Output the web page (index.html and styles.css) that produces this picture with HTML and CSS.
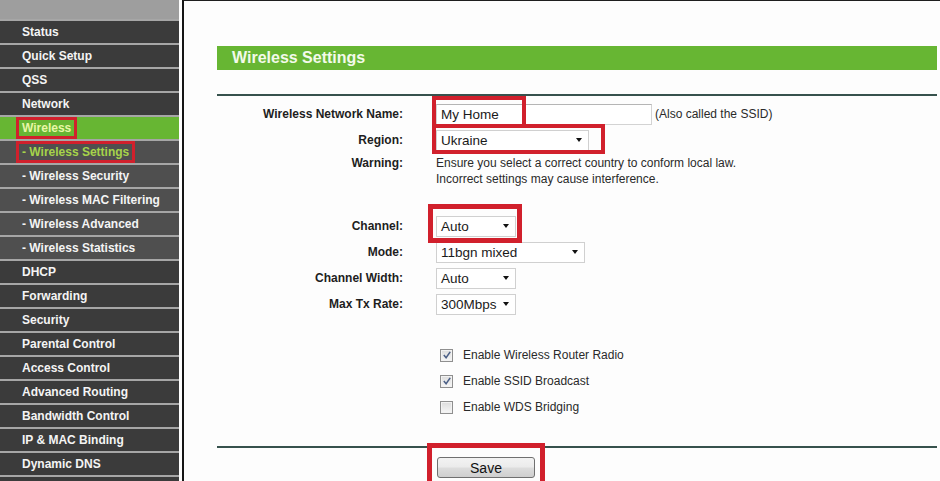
FILE: index.html
```html
<!DOCTYPE html>
<html lang="en">
<head>
<meta charset="UTF-8" />
<title>Wireless Settings</title>
<link rel="stylesheet" href="styles.css">
</head>
<body>
  <div class="page">
    <nav class="menu">
      <div class="menu-top"></div>
      <a class="item">Status</a>
      <a class="item">Quick Setup</a>
      <a class="item">QSS</a>
      <a class="item">Network</a>
      <a class="item active"><span class="flag">Wireless</span></a>
      <a class="item sub current"><span class="flag">- Wireless Settings</span></a>
      <a class="item sub">- Wireless Security</a>
      <a class="item sub">- Wireless MAC Filtering</a>
      <a class="item sub">- Wireless Advanced</a>
      <a class="item sub">- Wireless Statistics</a>
      <a class="item">DHCP</a>
      <a class="item">Forwarding</a>
      <a class="item">Security</a>
      <a class="item">Parental Control</a>
      <a class="item">Access Control</a>
      <a class="item">Advanced Routing</a>
      <a class="item">Bandwidth Control</a>
      <a class="item">IP &amp; MAC Binding</a>
      <a class="item">Dynamic DNS</a>
      <a class="item"></a>
    </nav>

    <main class="content">
      <h2 class="title-bar">Wireless Settings</h2>
      <div class="rule"></div>

      <form class="settings">
        <div class="row row-name">
          <span class="lbl">Wireless Network Name:</span>
          <div class="field">
            <span class="wrap">
              <input class="text" type="text" value="My Home" />
              <span class="mark mark-name"></span>
            </span>
            <span class="hint">(Also called the SSID)</span>
          </div>
        </div>

        <div class="row">
          <span class="lbl">Region:</span>
          <div class="field">
            <span class="wrap">
              <span class="select w-region">Ukraine <i class="arrow"></i></span>
              <span class="mark mark-region"></span>
            </span>
          </div>
        </div>

        <div class="row row-warning">
          <span class="lbl">Warning:</span>
          <div class="field note">
            Ensure you select a correct country to conform local law.<br />
            Incorrect settings may cause interference.
          </div>
        </div>

        <div class="row row-channel">
          <span class="lbl">Channel:</span>
          <div class="field">
            <span class="wrap">
              <span class="select w-short">Auto <i class="arrow"></i></span>
              <span class="mark mark-channel"></span>
            </span>
          </div>
        </div>

        <div class="row">
          <span class="lbl">Mode:</span>
          <div class="field">
            <span class="select w-mode">11bgn mixed <i class="arrow"></i></span>
          </div>
        </div>

        <div class="row">
          <span class="lbl">Channel Width:</span>
          <div class="field">
            <span class="select w-short">Auto <i class="arrow"></i></span>
          </div>
        </div>

        <div class="row">
          <span class="lbl">Max Tx Rate:</span>
          <div class="field">
            <span class="select w-short">300Mbps <i class="arrow"></i></span>
          </div>
        </div>

        <div class="row row-first-check">
          <span class="lbl"></span>
          <div class="field">
            <span class="check on"><svg viewBox="0 0 11 11"><path d="M2 5.5 L4.5 8.5 L9 2" /></svg></span>
            <span class="check-label">Enable Wireless Router Radio</span>
          </div>
        </div>

        <div class="row">
          <span class="lbl"></span>
          <div class="field">
            <span class="check on"><svg viewBox="0 0 11 11"><path d="M2 5.5 L4.5 8.5 L9 2" /></svg></span>
            <span class="check-label">Enable SSID Broadcast</span>
          </div>
        </div>

        <div class="row">
          <span class="lbl"></span>
          <div class="field">
            <span class="check"></span>
            <span class="check-label">Enable WDS Bridging</span>
          </div>
        </div>

        <div class="rule rule-bottom"></div>

        <div class="row row-save">
          <span class="lbl"></span>
          <div class="field">
            <span class="wrap">
              <button type="button" class="btn">Save</button>
              <span class="mark mark-save"></span>
            </span>
          </div>
        </div>
      </form>
    </main>
  </div>
</body>
</html>
```

FILE: styles.css
```css
:root {
  --menu-dark: #3b3b3b;
  --menu-sub: #4f4f4f;
  --menu-line: #a6a6a6;
  --green: #67b633;
  --red: #d1202c;
  --text: #222;
  --font: "Liberation Sans", Arial, sans-serif;
}
* {
  box-sizing: border-box;
}
html, body {
  margin: 0;
  padding: 0;
}
body {
  font-family: var(--font);
  font-size: 12px;
  color: var(--text);
  background: #fdfdfd;
}
.page {
  display: flex;
  height: 481px;
  overflow: hidden;
}

/* left menu */
.menu {
  width: 179px;
  flex: none;
  margin-right: 3px;
  background: var(--menu-dark);
  display: flex;
  flex-direction: column;
}
.menu-top {
  height: 19px;
  flex: none;
  background: #9e9e9e;
}
.item {
  display: block;
  flex: none;
  height: 24px;
  border-top: 2px solid var(--menu-line);
  padding-left: 22px;
  line-height: 22px;
  font-weight: 700;
  color: #f4f4f4;
  background: var(--menu-dark);
  white-space: nowrap;
}
.item.sub {
  background: var(--menu-sub);
}
.item.active {
  background: var(--green);
  color: #e9f6a6;
}
.item.current {
  color: #a6d44a;
}
.flag {
  display: inline-block;
  vertical-align: top;
  height: 22px;
  margin-left: -6px;
  padding: 0 3px;
  border: 3px solid var(--red);
  line-height: 16px;
}

/* content */
.content {
  flex: 1;
  border-left: 2px solid #151515;
  border-top: 1px solid #1e1e1e;
  padding: 0 3px 0 33px;
  background: #fdfdfd;
}
.title-bar {
  margin: 45px 0 0;
  height: 24px;
  padding-left: 15px;
  background: var(--green);
  color: #f3faea;
  font-size: 16px;
  line-height: 24px;
  font-weight: 700;
}
.rule {
  margin-top: 24px;
  border-top: 2px solid #37524d;
}
.rule-bottom {
  margin-top: 26px;
}

.settings {
  margin: 5px 0 0;
}
.row {
  display: grid;
  grid-template-columns: 186px 1fr;
  column-gap: 33px;
  align-items: center;
  height: 26px;
}
.lbl {
  text-align: right;
  font-weight: 700;
  color: #1e1e1e;
}
.field {
  display: flex;
  align-items: center;
}
.row-warning {
  align-items: start;
  height: 34px;
  padding-top: 2px;
  line-height: 16px;
}
.note {
  display: block;
  color: #2a2a2a;
}
.row-channel {
  margin-top: 26px;
}
.row-first-check {
  margin-top: 25px;
}
.row-save {
  margin-top: 9px;
  height: 22px;
  align-items: start;
}

.wrap {
  position: relative;
  display: inline-flex;
}
.text {
  width: 216px;
  height: 21px;
  margin: 0;
  padding: 0 4px;
  border: 1px solid #d3d3d3;
  border-top-color: #b5b5b5;
  background: #fff;
  font-family: var(--font);
  font-size: 13.5px;
  color: #1a1a1a;
  outline: none;
}
.hint {
  margin-left: 3px;
  color: #2a2a2a;
}
.select {
  display: inline-flex;
  align-items: center;
  height: 21px;
  padding-left: 4px;
  border: 1px solid #d0d0d0;
  background: #fff;
  font-size: 13.5px;
  color: #1a1a1a;
  white-space: nowrap;
}
.w-region { width: 153px; }
.w-mode { width: 149px; }
.w-short { width: 80px; }
.arrow {
  margin-left: auto;
  margin-right: 6px;
  width: 0;
  height: 0;
  border-left: 3.5px solid transparent;
  border-right: 3.5px solid transparent;
  border-top: 4px solid #111;
}

.check {
  display: inline-flex;
  align-items: center;
  justify-content: center;
  width: 13px;
  height: 13px;
  margin-left: 4px;
  border: 1px solid #8f8f8f;
  background: linear-gradient(#dcdcdc, #f7f7f7);
  box-shadow: inset 0 0 0 1px #f2f2f2;
}
.check svg {
  width: 10px;
  height: 10px;
}
.check path {
  fill: none;
  stroke: #4b5f86;
  stroke-width: 1.7;
}
.check-label {
  margin-left: 10px;
  color: #2a2a2a;
}

.btn {
  width: 98px;
  height: 21px;
  margin: 0 0 0 1px;
  padding: 0;
  border: 1px solid #707070;
  border-radius: 3px;
  background: linear-gradient(#f3f3f3 0%, #ebebeb 48%, #dddddd 52%, #cfcfcf 100%);
  font-family: var(--font);
  font-size: 14px;
  color: #111;
}

/* red annotation boxes laid over the fields */
.mark {
  position: absolute;
  border: 4px solid var(--red);
  pointer-events: none;
}
.mark-name {
  left: -4px;
  top: -8px;
  width: 94px;
  height: 32px;
}
.mark-region {
  left: -4px;
  top: -6px;
  width: 173px;
  height: 30px;
}
.mark-channel {
  left: -8px;
  top: -12px;
  width: 94px;
  height: 39px;
  border-width: 5px;
}
.mark-save {
  left: -9px;
  top: -14px;
  width: 118px;
  height: 46px;
  border-width: 5px;
}
```
